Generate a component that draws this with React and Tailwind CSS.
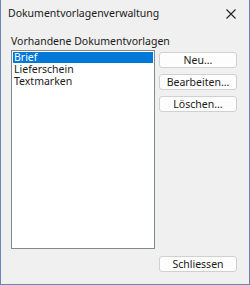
export default function App() {
  const btn =
    "h-[16px] w-[78px] rounded-[3px] border border-[#d0d0d0] bg-[#fdfdfd] text-[10.5px] leading-none text-[#1a1a1a] flex items-center justify-center";
  return (
    <div
      className="w-[250px] h-[285px] bg-[#f0f0f0] border-x border-b border-[#6a87bd] flex flex-col text-[#1a1a1a]"
      style={{ fontFamily: '"Segoe UI", "Noto Sans", sans-serif' }}
    >
      <div className="h-[27px] flex items-center justify-between pl-[7px] pr-[13px]">
        <span className="text-[10.5px]">Dokumentvorlagenverwaltung</span>
        <svg width="10" height="10" viewBox="0 0 10 10" className="text-[#222]">
          <path d="M0.5 0.5 L9.5 9.5 M9.5 0.5 L0.5 9.5" stroke="currentColor" strokeWidth="1.1" />
        </svg>
      </div>
      <div className="flex-1 flex flex-col pl-[10px] pr-[12px] pt-[8px] pb-[12px]">
        <div className="text-[10.5px] leading-[13px] mb-[2px]">Vorhandene Dokumentvorlagen</div>
        <div className="flex gap-[4px]">
          <div className="w-[145px] h-[199px] bg-white border border-[#828790] p-[1px] text-[10.5px]">
            <div className="bg-[#0078d7] text-white pl-[1px] h-[11px] leading-[11px] mb-[1px]">Brief</div>
            <div className="pl-[1px] h-[12px] leading-[11px]">Lieferschein</div>
            <div className="pl-[1px] h-[12px] leading-[11px]">Textmarken</div>
          </div>
          <div className="flex flex-col gap-[6px] pt-[2px]">
            <div className={btn}>Neu...</div>
            <div className={btn}>Bearbeiten...</div>
            <div className={btn}>Löschen...</div>
          </div>
        </div>
        <div className="flex justify-end mt-auto">
          <div className={btn}>Schliessen</div>
        </div>
      </div>
    </div>
  );
}
